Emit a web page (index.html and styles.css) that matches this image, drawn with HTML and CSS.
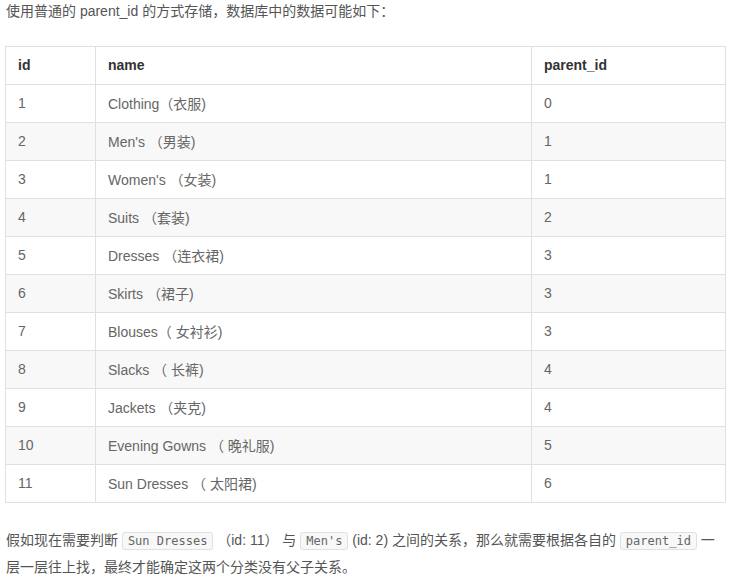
FILE: index.html
```html
<!DOCTYPE html>
<html lang="zh">
<head>
<meta charset="utf-8">
<link rel="stylesheet" href="styles.css">
</head>
<body>
<div class="article">
  <p class="intro">使用普通的 parent_id 的方式存储，数据库中的数据可能如下：</p>
  <table class="data">
    <thead>
      <tr><th class="c-id">id</th><th class="c-name">name</th><th>parent_id</th></tr>
    </thead>
    <tbody>
      <tr><td>1</td><td>Clothing（衣服)</td><td>0</td></tr>
      <tr><td>2</td><td>Men's （男装)</td><td>1</td></tr>
      <tr><td>3</td><td>Women's （女装)</td><td>1</td></tr>
      <tr><td>4</td><td>Suits （套装)</td><td>2</td></tr>
      <tr><td>5</td><td>Dresses （连衣裙)</td><td>3</td></tr>
      <tr><td>6</td><td>Skirts （裙子)</td><td>3</td></tr>
      <tr><td>7</td><td>Blouses（ 女衬衫)</td><td>3</td></tr>
      <tr><td>8</td><td>Slacks （ 长裤)</td><td>4</td></tr>
      <tr><td>9</td><td>Jackets （夹克)</td><td>4</td></tr>
      <tr><td>10</td><td>Evening Gowns （ 晚礼服)</td><td>5</td></tr>
      <tr><td>11</td><td>Sun Dresses （ 太阳裙)</td><td>6</td></tr>
    </tbody>
  </table>
  <p class="outro">假如现在需要判断 <code>Sun Dresses</code> （id: 11） 与 <code>Men's</code> (id: 2) 之间的关系，那么就需要根据各自的 <code>parent_id</code> 一层一层往上找，最终才能确定这两个分类没有父子关系。</p>
</div>
</body>
</html>
```
FILE: styles.css
```css
html, body {
  margin: 0;
  padding: 0;
  background: #fff;
}
.article {
  width: 721px;
  padding: 0 7px 0 5px;
  font-family: "Liberation Sans", Arial, "Noto Sans CJK SC", sans-serif;
  font-size: 14px;
  color: #555;
}
.intro {
  margin: 0 0 24px 1px;
  line-height: 22px;
}
.data {
  width: 721px;
  border-collapse: collapse;
  border: 1px solid #e0e0e0;
}
.data th, .data td {
  border: 1px solid #e0e0e0;
  padding: 0 12px 2px;
  height: 35px;
  text-align: left;
  font-size: 14px;
}
.data th {
  font-weight: bold;
  color: #333;
}
.data td {
  color: #666;
}
.c-id { width: 65px; }
.c-name { width: 411px; }
.data tbody tr:nth-child(even) td {
  background: #f8f8f8;
}
.outro {
  margin: 24px 0 0 1px;
  line-height: 26px;
}
.outro code {
  font-family: "DejaVu Sans Mono", "Liberation Mono", monospace;
  font-size: 12px;
  color: #666;
  background: #f8f8f8;
  border: 1px solid #e0e0e0;
  border-radius: 3px;
  padding: 1px 5px;
  margin: 0;
}
```
